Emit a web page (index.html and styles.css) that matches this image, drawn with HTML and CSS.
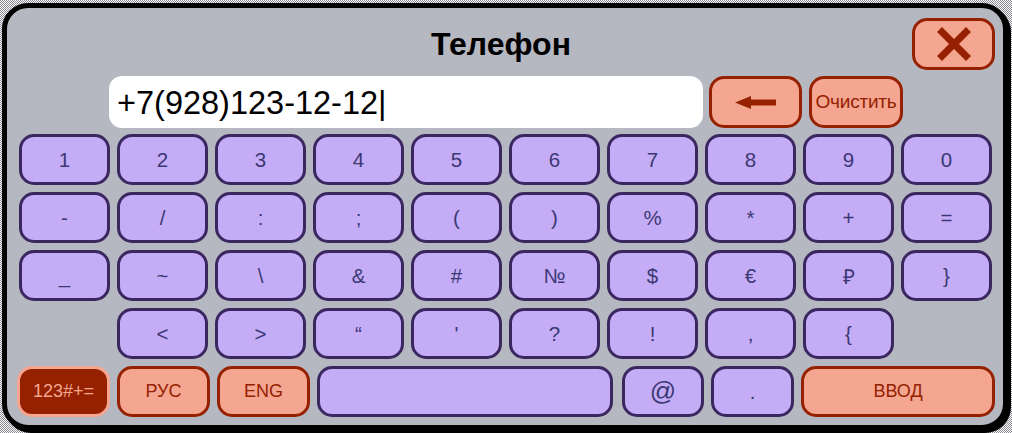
FILE: index.html
```html
<!DOCTYPE html>
<html lang="ru">
<head>
<meta charset="utf-8">
<title>Телефон</title>
<link rel="stylesheet" href="styles.css">
</head>
<body>
<div class="window">
  <div class="header">
    <div class="spacer"></div>
    <div class="title">Телефон</div>
    <div class="header-right">
      <button class="btn-red close" aria-label="Закрыть">
        <svg width="34" height="34" viewBox="0 0 34 34"><path d="M2.5 2.5 L31.5 31.5 M31.5 2.5 L2.5 31.5" stroke="#952100" stroke-width="7" fill="none"/></svg>
      </button>
    </div>
  </div>
  <div class="input-row">
    <div class="field">+7(928)123-12-12|</div>
    <button class="btn-red back" aria-label="Удалить">
      <svg width="41" height="13" viewBox="0 0 41 13"><path d="M0 6.5 L16 0 L16 3.5 L41 3.5 L41 9.5 L16 9.5 L16 13 Z" fill="#952100"/></svg>
    </button>
    <button class="btn-red clear">Очистить</button>
  </div>
  <div class="keys">
    <div class="key">1</div><div class="key">2</div><div class="key">3</div><div class="key">4</div><div class="key">5</div>
    <div class="key">6</div><div class="key">7</div><div class="key">8</div><div class="key">9</div><div class="key">0</div>
    <div class="key">-</div><div class="key">/</div><div class="key">:</div><div class="key">;</div><div class="key">(</div>
    <div class="key">)</div><div class="key">%</div><div class="key">*</div><div class="key">+</div><div class="key">=</div>
    <div class="key">_</div><div class="key">~</div><div class="key">\</div><div class="key">&amp;</div><div class="key">#</div>
    <div class="key">№</div><div class="key">$</div><div class="key">€</div><div class="key">₽</div><div class="key">}</div>
    <div class="key c2">&lt;</div><div class="key">&gt;</div><div class="key">“</div><div class="key">'</div><div class="key">?</div>
    <div class="key">!</div><div class="key">,</div><div class="key">{</div>
  </div>
  <div class="bottom-row">
    <div class="mode active">123#+=</div>
    <div class="mode">РУС</div>
    <div class="mode">ENG</div>
    <div class="key space"></div>
    <div class="key at">@</div>
    <div class="key dot">.</div>
    <div class="mode enter">ВВОД</div>
  </div>
</div>
</body>
</html>
```

FILE: styles.css
```css
html, body {
  margin: 0;
  padding: 0;
}
body {
  width: 1012px;
  height: 433px;
  overflow: hidden;
  background-color: #ffffff;
  background-image: repeating-conic-gradient(#ffffff 0 25%, #8a8a94 0 50%);
  background-size: 2px 2px;
  font-family: "Liberation Sans", Arial, sans-serif;
}
.window {
  box-sizing: border-box;
  margin: 3px 0 0 2px;
  width: 1006px;
  height: 427px;
  border: 5px solid #000;
  border-radius: 26px;
  box-shadow: 3px 3px 0 #000;
  background: #b5b7c1;
  padding: 10px 8px 8px 12px;
  display: flex;
  flex-direction: column;
}
button {
  font-family: inherit;
  padding: 0;
  margin: 0;
  cursor: pointer;
}
.header {
  height: 52px;
  display: grid;
  grid-template-columns: 1fr auto 1fr;
  align-items: center;
}
.title {
  font-size: 32px;
  font-weight: bold;
  color: #000;
  margin-right: 12px;
}
.header-right {
  display: flex;
  justify-content: flex-end;
}
.btn-red {
  box-sizing: border-box;
  background: #f4a690;
  border: 3px solid #952100;
  border-radius: 15px;
  color: #952100;
  display: flex;
  align-items: center;
  justify-content: center;
}
.close {
  width: 83px;
  height: 52px;
}
.input-row {
  margin-top: 6px;
  height: 52px;
  display: flex;
  padding-left: 90px;
}
.field {
  box-sizing: border-box;
  width: 594px;
  height: 52px;
  background: #fff;
  border-radius: 13px;
  padding-left: 8px;
  font-size: 32.5px;
  line-height: 54px;
  color: #000;
  white-space: nowrap;
}
.back {
  width: 93px;
  height: 52px;
  margin-left: 6px;
}
.clear {
  width: 94px;
  height: 52px;
  margin-left: 7px;
  font-size: 19px;
  letter-spacing: -0.2px;
  white-space: nowrap;
}
.keys {
  margin-top: 6px;
  display: grid;
  grid-template-columns: repeat(10, 91px);
  grid-auto-rows: 51px;
  column-gap: 7px;
  row-gap: 7px;
}
.key {
  box-sizing: border-box;
  background: #c4adf6;
  border: 3px solid #3b2760;
  border-radius: 15px;
  color: #3c3874;
  font-size: 20.5px;
  display: flex;
  align-items: center;
  justify-content: center;
}
.c2 {
  grid-column-start: 2;
}
.bottom-row {
  margin-top: 7px;
  margin-left: -2px;
  height: 51px;
  display: flex;
}
.mode {
  box-sizing: border-box;
  width: 93px;
  height: 51px;
  margin-right: 7px;
  background: #f4a690;
  border: 3px solid #952100;
  border-radius: 15px;
  color: #952100;
  font-size: 18px;
  display: flex;
  align-items: center;
  justify-content: center;
}
.mode.active {
  background: #952100;
  border-color: #f4a690;
  color: #f4a690;
}
.space {
  width: 296px;
  margin-right: 9px;
}
.at {
  width: 82px;
  margin-right: 7px;
  font-size: 26px;
}
.dot {
  width: 83px;
  margin-right: 7px;
}
.mode.enter {
  width: 194px;
  margin-right: 0;
}
```
